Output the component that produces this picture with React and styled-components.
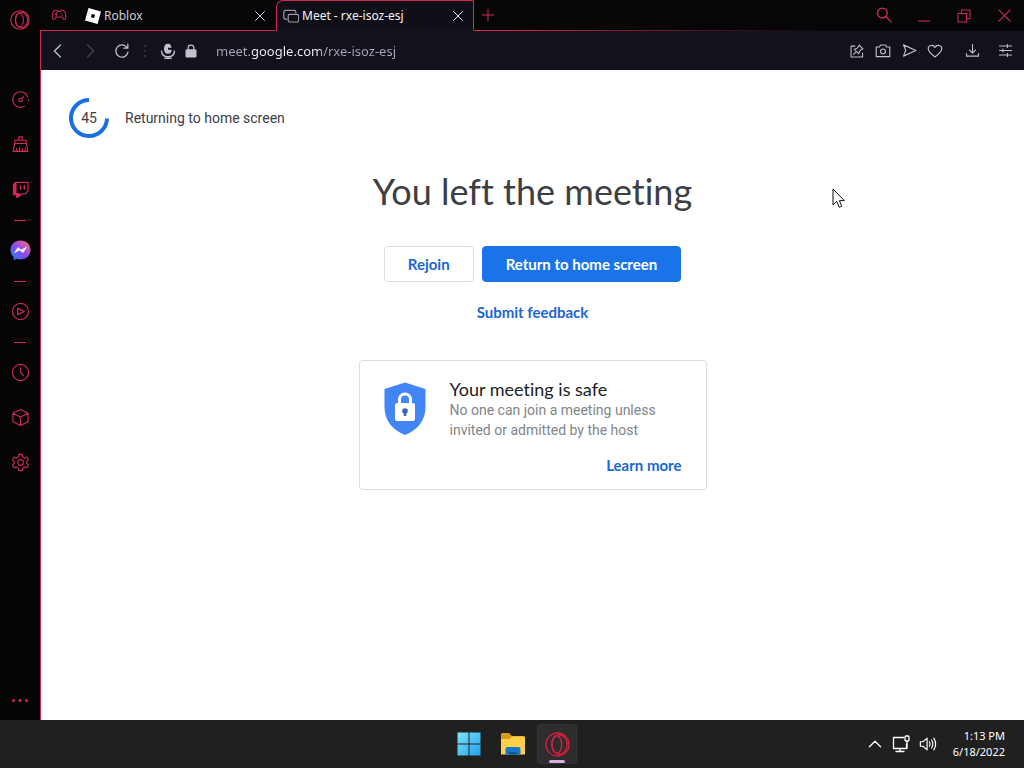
import React from "react";
import styled, { createGlobalStyle } from "styled-components";

const accent = "#cf2b55";
const ui = '"Noto Sans", "Open Sans", sans-serif';
const product = 'Lato, "Open Sans", sans-serif';
const body = 'Roboto, "Liberation Sans", sans-serif';

const GlobalStyle = createGlobalStyle`
  * { box-sizing: border-box; }
  body { margin: 0; background: #060508; font-family: ${body}; font-variant-ligatures: none; }
  button { border: 0; padding: 0; margin: 0; background: none; font: inherit; color: inherit; cursor: pointer; }
  h1, h2, p { margin: 0; font-weight: 400; }
`;

const Desktop = styled.div`
  min-height: 100vh;
  display: flex;
  flex-direction: column;
`;

const Browser = styled.div`
  flex: 1;
  display: flex;
`;

const Sidebar = styled.nav`
  flex: 0 0 40px;
  display: flex;
  flex-direction: column;
  align-items: stretch;
  background: #050406;
  color: ${accent};
`;

const SideButton = styled.button`
  height: ${(p) => (p.$head ? 40 : 45)}px;
  margin-bottom: ${(p) => (p.$head ? 37 : 0)}px;
  margin-top: ${(p) => (p.$end ? "auto" : "0")};
  display: grid;
  place-items: center;
`;

const SideRule = styled.hr`
  width: 12px;
  height: 1px;
  margin: 8px auto 7px;
  border: 0;
  background: ${accent};
`;

const WindowColumn = styled.div`
  flex: 1;
  min-width: 0;
  display: flex;
  flex-direction: column;
`;

const TabStrip = styled.header`
  height: 31px;
  display: flex;
  color: #e2e0e6;
  font-family: ${ui};
  font-size: 12px;
`;

const StripButton = styled.button`
  width: ${(p) => p.$width}px;
  display: grid;
  place-items: center;
  color: ${accent};
  border-bottom: ${(p) => (p.$lined ? `1px solid ${accent}` : "0")};
`;

const Tab = styled.div`
  width: ${(p) => (p.$active ? 198 : 199)}px;
  display: flex;
  align-items: center;
  padding: 0 8px 0 ${(p) => (p.$active ? 6 : 7)}px;
  border: 1px solid ${(p) => (p.$active ? accent : "transparent")};
  border-bottom-color: ${(p) => (p.$active ? "#12101a" : accent)};
  border-radius: ${(p) => (p.$active ? "7px 2px 0 0" : "0")};
  background: ${(p) => (p.$active ? "#100e16" : "transparent")};
  color: ${(p) => (p.$active ? "#f5f4f7" : "#d2d0d6")};
`;

const TabTitle = styled.button`
  flex: 1;
  min-width: 0;
  display: flex;
  align-items: center;
  gap: 3px;
  text-align: left;
  white-space: nowrap;
`;

const CloseTab = styled.button`
  width: 14px;
  height: 14px;
  display: grid;
  place-items: center;
`;

const StripSpace = styled.div`
  flex: 1;
  background: linear-gradient(90deg, ${accent}, #060508 90%) bottom / 100% 1px no-repeat;
`;

const WindowBody = styled.div`
  flex: 1;
  display: flex;
  flex-direction: column;
  border-left: 1px solid ${accent};
`;

const Toolbar = styled.div`
  height: 39px;
  display: flex;
  align-items: center;
  background: #13111b;
  color: #c3c0d0;
  padding-right: 10px;
`;

const ToolButton = styled.button`
  width: ${(p) => p.$width || 26}px;
  height: 26px;
  display: grid;
  place-items: center;
  color: ${(p) => (p.$dim ? "#4a4756" : "inherit")};
`;

const Address = styled.input`
  flex: 1;
  min-width: 0;
  height: 26px;
  border: 0;
  outline: 0;
  padding: 0;
  margin-left: 18px;
  font: 13px/26px ${ui};
  color: transparent;
  background: linear-gradient(90deg, #a9a6b8 35px, #f3f2f7 35px 105px, #a9a6b8 105px);
  -webkit-background-clip: text;
  background-clip: text;
`;

const Page = styled.main`
  position: relative;
  flex: 1;
  background: #fff;
  color: #3c4043;
`;

const Countdown = styled.div`
  display: flex;
  align-items: center;
  gap: 16px;
  padding: 28px 28px 0;
  font-size: 14px;
  line-height: 20px;
`;

const Ring = styled.div`
  display: grid;
  place-items: center;
  > * { grid-area: 1 / 1; }
`;

const Left = styled.section`
  display: flex;
  flex-direction: column;
  align-items: center;
  padding-top: 31px;
`;

const Title = styled.h1`
  font: 400 36px/44px ${product};
  font-variant-ligatures: none;
  color: #3c4043;
`;

const Actions = styled.div`
  display: flex;
  gap: 8px;
  margin-top: 33px;
`;

const Action = styled.button`
  height: 36px;
  padding: 0 23px;
  border: 1px solid ${(p) => (p.$primary ? "#1a73e8" : "#dadce0")};
  border-radius: 4px;
  background: ${(p) => (p.$primary ? "#1a73e8" : "#fff")};
  color: ${(p) => (p.$primary ? "#fff" : "#1a67d2")};
  font: 700 15px/20px ${product};
`;

const TextLink = styled.a`
  font: 700 15px/20px ${product};
  color: #1a67d2;
  text-decoration: none;
`;

const Feedback = styled(TextLink)`
  margin-top: 20px;
`;

const Card = styled.section`
  width: 348px;
  max-width: 100%;
  margin-top: 38px;
  padding: 18px 24px 14px;
  border: 1px solid #dadce0;
  border-radius: 4px;
  display: flex;
  flex-direction: column;
`;

const CardBody = styled.div`
  display: flex;
  gap: 22px;
  > svg { flex: none; }
`;

const CardTitle = styled.h2`
  font: 400 18px/20px ${product};
  font-variant-ligatures: none;
  color: #202124;
`;

const CardText = styled.p`
  padding-top: 1px;
  font-size: 14px;
  line-height: 20px;
  color: #80868b;
`;

const CardLink = styled(TextLink)`
  align-self: flex-end;
  margin-top: 15px;
`;

const Pointer = styled.svg`
  position: absolute;
  left: 791px;
  top: 118px;
`;

const Taskbar = styled.footer`
  height: 48px;
  display: grid;
  grid-template-columns: 1fr auto 1fr;
  align-items: center;
  background: #202020;
  color: #fff;
`;

const Apps = styled.div`
  grid-column: 2;
  display: flex;
  gap: 4px;
  padding-left: 2px;
`;

const AppButton = styled.button`
  width: 40px;
  height: 40px;
  border-radius: 4px;
  display: grid;
  place-items: center;
  background: ${(p) => (p.$active ? "#2d2d2d" : "transparent")};
  box-shadow: ${(p) => (p.$active ? "inset 0 0 0 1px #343434" : "none")};
  > * { grid-area: 1 / 1; }
`;

const Running = styled.span`
  align-self: end;
  width: 16px;
  height: 3px;
  margin-bottom: 1px;
  border-radius: 2px;
  background: #d9addd;
`;

const Tray = styled.div`
  justify-self: end;
  display: flex;
  align-items: center;
  gap: 8px;
  padding-right: 19px;
`;

const TrayButton = styled.button`
  display: grid;
  place-items: center;
`;

const Clock = styled.time`
  margin-left: 8px;
  text-align: right;
  font: 11px/16px ${ui};
`;

function Icon({ size = 20, w = 1.2, children, ...rest }) {
  return (
    <svg width={size} height={size} viewBox="0 0 20 20" fill="none" stroke="currentColor"
      strokeWidth={w} strokeLinecap="round" strokeLinejoin="round" aria-hidden="true" {...rest}>
      {children}
    </svg>
  );
}

const OperaMark = ({ size, color = accent }) => (
  <Icon size={size} w={1.1} stroke={color}>
    <circle cx="10" cy="10" r="9.2" />
    <ellipse cx="9.500" cy="10" rx="3.900" ry="7" />
    <ellipse cx="11.500" cy="10" rx="6.200" ry="7.800" />
  </Icon>
);

const Cross = ({ size = 12 }) => (
  <Icon size={size} w={1.6}><path d="M2.500 2.500L17.500 17.500M17.500 2.500L2.500 17.500" /></Icon>
);

export default function App() {
  return (
    <Desktop>
      <GlobalStyle />
      <Browser>
        <Sidebar aria-label="Sidebar">
          <SideButton $head aria-label="Opera menu"><OperaMark size={20} /></SideButton>
          <SideButton aria-label="GX Control">
            <Icon size={19}><path d="M14 17.200A8.200 8.200 0 1 1 17.800 7.500" /><path d="M18.200 10V13" strokeDasharray="1.500 2" /><circle cx="10" cy="10.500" r="1.800" /><path d="M11.300 9.200L13.500 7" /></Icon>
          </SideButton>
          <SideButton aria-label="GX Cleaner">
            <Icon size={19}><path d="M8.200 5.500V2H11.800V5.500M4 9V5.500H16V9M3.800 9H16.200L17.800 17.300H2.200ZM6 14V17M9 13V17M12 14V17M15 13.500V17" /></Icon>
          </SideButton>
          <SideButton aria-label="Twitch">
            <Icon size={19}><path d="M5 2.500H18V11.500L15 14.500H11.500L8.500 17.500V14.500H5Z" /><path d="M5 2.500L2.500 5V15.500H6V18.500L9 16V14.500H5Z" fill="currentColor" /><path d="M10 6V9.500M14 6V9.500" strokeWidth="1.600" /></Icon>
          </SideButton>
          <SideRule />
          <SideButton aria-label="Messenger">
            <svg width="21" height="21" viewBox="0 0 21 21" aria-hidden="true">
              <defs>
                <linearGradient id="msg" x1="0" y1="1" x2="0.900" y2="0">
                  <stop offset="0" stopColor="#1688ff" /><stop offset="0.500" stopColor="#8a48ee" /><stop offset="1" stopColor="#ff6878" />
                </linearGradient>
              </defs>
              <path d="M10.500 0.500C4.700 0.500 0.500 4.600 0.500 10C0.500 12.900 1.700 15.300 3.600 17V20.300L6.700 18.700C7.900 19.100 9.100 19.400 10.500 19.400C16.300 19.400 20.500 15.300 20.500 10S16.300 0.500 10.500 0.500Z" fill="url(#msg)" />
              <path d="M4.500 12.700L8 7.500L11.300 10L16.500 7.300L13 12.600L9.600 10.100Z" fill="#fff" stroke="#fff" strokeWidth="0.600" strokeLinejoin="round" />
            </svg>
          </SideButton>
          <SideRule />
          <SideButton aria-label="Player">
            <Icon size={19}><circle cx="10" cy="10" r="8.500" /><path d="M7 6.700L14 10L7 13.300Z" /></Icon>
          </SideButton>
          <SideRule />
          <SideButton aria-label="History">
            <Icon size={19}><circle cx="10" cy="10" r="8.500" /><path d="M10 5V10L13.200 13.400" /></Icon>
          </SideButton>
          <SideButton aria-label="Extensions">
            <Icon size={19}><path d="M10 1.500L18 5.500V14.500L10 18.500L2 14.500V5.500ZM2 5.500L10 9.500L18 5.500M10 9.500V18.500" /></Icon>
          </SideButton>
          <SideButton aria-label="Settings">
            <Icon size={19}><circle cx="10" cy="10" r="3" /><path d="M8.300 1.500H11.700L12.300 4L14.300 5.200L16.700 4.300L18.400 7.300L16.500 9V11L18.400 12.700L16.700 15.700L14.300 14.800L12.300 16L11.700 18.500H8.300L7.700 16L5.700 14.800L3.300 15.700L1.600 12.700L3.500 11V9L1.600 7.300L3.300 4.300L5.700 5.200L7.700 4Z" /></Icon>
          </SideButton>
          <SideButton $end aria-label="More">
            <Icon fill="currentColor" stroke="none"><circle cx="3.500" cy="12.500" r="1.500" /><circle cx="10" cy="12.500" r="1.500" /><circle cx="16.500" cy="12.500" r="1.500" /></Icon>
          </SideButton>
        </Sidebar>

        <WindowColumn>
          <TabStrip>
            <StripButton $width={37} $lined aria-label="GX Corner">
              <Icon size={16} w={1.300}><path d="M5.500 4H7.500L8.500 5.500H11.500L12.500 4H14.500C17.500 4 18.500 8 18.500 12.500C18.500 16.500 16 16.500 14.500 14L13.500 12.500H6.500L5.500 14C4 16.500 1.500 16.500 1.500 12.500C1.500 8 2.500 4 5.500 4Z" /><path d="M6.500 7V10.500M4.800 8.800H8.200M13 7.800V8M14.500 10V10.200" /></Icon>
            </StripButton>
            <Tab>
              <TabTitle>
                <svg width="16" height="16" viewBox="0 0 16 16" aria-hidden="true"><path d="M3.500 0L16 3.400L12.600 16L0 12.600ZM6.700 5.900L5.900 9.200L9.200 10.100L10.100 6.800Z" fill="#fff" fillRule="evenodd" /></svg>
                Roblox
              </TabTitle>
              <CloseTab aria-label="Close Roblox"><Cross /></CloseTab>
            </Tab>
            <Tab $active>
              <TabTitle>
                <Icon size={16} w={1.500} stroke="#9a98a0"><path d="M5 14H3.500Q1 14 1 11.500V5.500Q1 3 3.500 3H14Q16 3 16 5V6" /><rect x="6.500" y="8" width="13" height="9.500" rx="2" /></Icon>
                Meet - rxe-isoz-esj
              </TabTitle>
              <CloseTab aria-label="Close Meet"><Cross /></CloseTab>
            </Tab>
            <StripButton $width={28} $lined aria-label="New tab"><Icon size={14} w={1.500}><path d="M10 2V18M2 10H18" /></Icon></StripButton>
            <StripSpace />
            <StripButton $width={40} aria-label="Search tabs"><Icon size={17} w={1.500}><circle cx="7.500" cy="7" r="5.800" /><path d="M12 11.500L18 17.500" /></Icon></StripButton>
            <StripButton $width={40} aria-label="Minimize"><Icon size={14} w={1.500}><path d="M2 17H18" /></Icon></StripButton>
            <StripButton $width={40} aria-label="Restore"><Icon size={14} w={1.500}><rect x="1.500" y="6.500" width="12" height="12" /><path d="M6.500 6.500V1.500H18.500V13.500H13.500" /></Icon></StripButton>
            <StripButton $width={40} aria-label="Close"><Cross size={15} /></StripButton>
          </TabStrip>

          <WindowBody>
            <Toolbar>
              <ToolButton $width={33} aria-label="Back"><Icon size={16} w={1.600}><path d="M13 2.500L5.500 10L13 17.500" /></Icon></ToolButton>
              <ToolButton $width={32} $dim aria-label="Forward"><Icon size={16} w={1.500}><path d="M7 2.500L14.500 10L7 17.500" /></Icon></ToolButton>
              <ToolButton $width={32} aria-label="Reload"><Icon size={16} w={1.600}><path d="M16.500 6A7.700 7.700 0 1 0 17.500 11.500M17.300 1.500V6.500H12.300" /></Icon></ToolButton>
              <ToolButton $width={14} $dim aria-label="Site tools"><Icon size={14} stroke="none" fill="currentColor"><circle cx="10" cy="3" r="1.200" /><circle cx="10" cy="10" r="1.200" /><circle cx="10" cy="17" r="1.200" /></Icon></ToolButton>
              <ToolButton $width={32} aria-label="Microphone access"><Icon size={16} w={1.700}><path d="M2 10C2 15 5.500 17.200 10 17.200S18 15 18 10" /><path d="M13.500 3C12.500 1.500 11.500 1 10 1C6.500 1 5 3.500 5 7.500S7 13.500 10 13.500S14.500 11.500 14.500 8.500H10V6H14.500Z" fill="currentColor" stroke="none" /><path d="M10 17V19M6 19H14" /></Icon></ToolButton>
              <ToolButton $width={14} aria-label="Site information"><Icon size={14} w={1.800}><rect x="3" y="8.500" width="14" height="10" rx="1" fill="currentColor" /><path d="M6 8V5Q6 1.500 10 1.500T14 5V8" /></Icon></ToolButton>
              <Address aria-label="Address" defaultValue="meet.google.com/rxe-isoz-esj" spellCheck={false} />
              <ToolButton aria-label="Pinboards"><Icon size={14} w={1.500}><path d="M7 3H1.500V18.500H18V13" /><path d="M13 1.500L18.500 7L16.500 7.500L13.500 10.500L12.500 14L6 7.500L9.500 6.500L12.500 3.500ZM9 11L5 15" /></Icon></ToolButton>
              <ToolButton aria-label="Snapshot"><Icon size={16} w={1.400}><path d="M1.500 5H5.500L7 2.500H13L14.500 5H18.500V17H1.500Z" /><circle cx="10" cy="10.500" r="3" /></Icon></ToolButton>
              <ToolButton aria-label="My Flow"><Icon size={15} w={1.500}><path d="M2 2.500L18.500 10L2 17.500L5 10Z" /></Icon></ToolButton>
              <ToolButton aria-label="Bookmark"><Icon size={16} w={1.400}><path d="M10 17.500C4 13 1.500 10.500 1.500 7C1.500 2.500 7.500 1.500 10 5.500C12.500 1.500 18.500 2.500 18.500 7C18.500 10.500 16 13 10 17.500Z" /></Icon></ToolButton>
              <ToolButton $width={48} aria-label="Downloads"><Icon size={15} w={1.500}><path d="M10 2V13M6 9.500L10 13.500L14 9.500M2 14V17.500H18V14" /></Icon></ToolButton>
              <ToolButton $width={18} aria-label="Easy setup"><Icon size={15} w={1.500}><path d="M2 4H18M2 10H18M2 16H18M12.500 2V6M6.500 8V12M12.500 14V18" /></Icon></ToolButton>
            </Toolbar>

            <Page>
              <Countdown>
                <Ring>
                  <svg width="40" height="40" viewBox="0 0 40 40" aria-hidden="true"><path d="M20 2A18 18 0 1 0 38 20.500" fill="none" stroke="#1a6fe0" strokeWidth="4" /></svg>
                  <span>45</span>
                </Ring>
                <span>Returning to home screen</span>
              </Countdown>
              <Left>
                <Title>You left the meeting</Title>
                <Actions>
                  <Action>Rejoin</Action>
                  <Action $primary>Return to home screen</Action>
                </Actions>
                <Feedback href="#feedback">Submit feedback</Feedback>
                <Card>
                  <CardBody>
                    <svg width="44" height="58" viewBox="0 0 44 58" aria-hidden="true">
                      <path d="M21 3.500L41.500 10V28C41.500 42 33 51 21 56C9 51 0.500 42 0.500 28V10Z" fill="#4285f4" />
                      <path d="M15.500 25V20.500A5.500 5.500 0 0 1 26.500 20.500V25" fill="none" stroke="#fff" strokeWidth="3" />
                      <rect x="11" y="24" width="20" height="18" rx="2" fill="#fff" />
                      <circle cx="21" cy="32" r="2.800" fill="#3566c4" />
                      <path d="M19.700 32H22.300V37H19.700Z" fill="#3566c4" />
                    </svg>
                    <div>
                      <CardTitle>Your meeting is safe</CardTitle>
                      <CardText>No one can join a meeting unless invited or admitted by the host</CardText>
                    </div>
                  </CardBody>
                  <CardLink href="#learn">Learn more</CardLink>
                </Card>
              </Left>
              <Pointer width="13" height="21" viewBox="0 0 13 21" aria-hidden="true">
                <path d="M1 1V17L4.800 13.500L7.200 19.300L9.800 18.200L7.400 12.600H12.300Z" fill="#fff" stroke="#111" strokeLinejoin="round" />
              </Pointer>
            </Page>
          </WindowBody>
        </WindowColumn>
      </Browser>

      <Taskbar>
        <Apps>
          <AppButton aria-label="Start">
            <svg width="24" height="24" viewBox="0 0 24 24" aria-hidden="true">
              <defs><linearGradient id="win" x1="0" y1="0" x2="1" y2="1"><stop offset="0" stopColor="#7fe3fb" /><stop offset="1" stopColor="#1fa0ea" /></linearGradient></defs>
              <path d="M0.500 0.500H11.500V11.500H0.500ZM12.500 0.500H23.500V11.500H12.500ZM0.500 12.500H11.500V23.500H0.500ZM12.500 12.500H23.500V23.500H12.500Z" fill="url(#win)" />
            </svg>
          </AppButton>
          <AppButton aria-label="File Explorer">
            <svg width="26" height="24" viewBox="0 0 26 24" aria-hidden="true">
              <path d="M1 2.500Q1 1 2.500 1H9L12 4H23.500Q25 4 25 5.500V10H1Z" fill="#d99b1c" />
              <path d="M1 7H9.500L12 4.500H23.500Q25 4.500 25 6V22.500H1Z" fill="#fbd14b" />
              <path d="M5.500 22.500V17Q5.500 15 7.500 15H18.500Q20.500 15 20.500 17V22.500Z" fill="#1976c5" />
              <path d="M9 22.500V20H17V22.500Z" fill="#0d5796" />
            </svg>
          </AppButton>
          <AppButton $active aria-label="Opera GX"><OperaMark size={25} color="#d81f43" /><Running /></AppButton>
        </Apps>
        <Tray>
          <TrayButton aria-label="Show hidden icons"><Icon size={16} w={1.600}><path d="M3 13.500L10 6.500L17 13.500" /></Icon></TrayButton>
          <TrayButton aria-label="Network"><Icon size={20} w={1.300}><path d="M12.500 3.500H2.500V14.500H15.500V10M9 14.500V17.500M5 17.500H13" /><rect x="14" y="2" width="4" height="5" rx="1" /><path d="M16 7V14.500" /></Icon></TrayButton>
          <TrayButton aria-label="Volume"><Icon size={18} w={1.300}><path d="M1.500 7.500H4.500L9 3.500V16.500L4.500 12.500H1.500ZM11.500 7.500Q13 10 11.500 12.500M14 5.500Q16.800 10 14 14.500M16.500 3.500Q20.500 10 16.500 16.500" /></Icon></TrayButton>
          <Clock dateTime="2022-06-18T13:13">1:13 PM<br />6/18/2022</Clock>
        </Tray>
      </Taskbar>
    </Desktop>
  );
}
